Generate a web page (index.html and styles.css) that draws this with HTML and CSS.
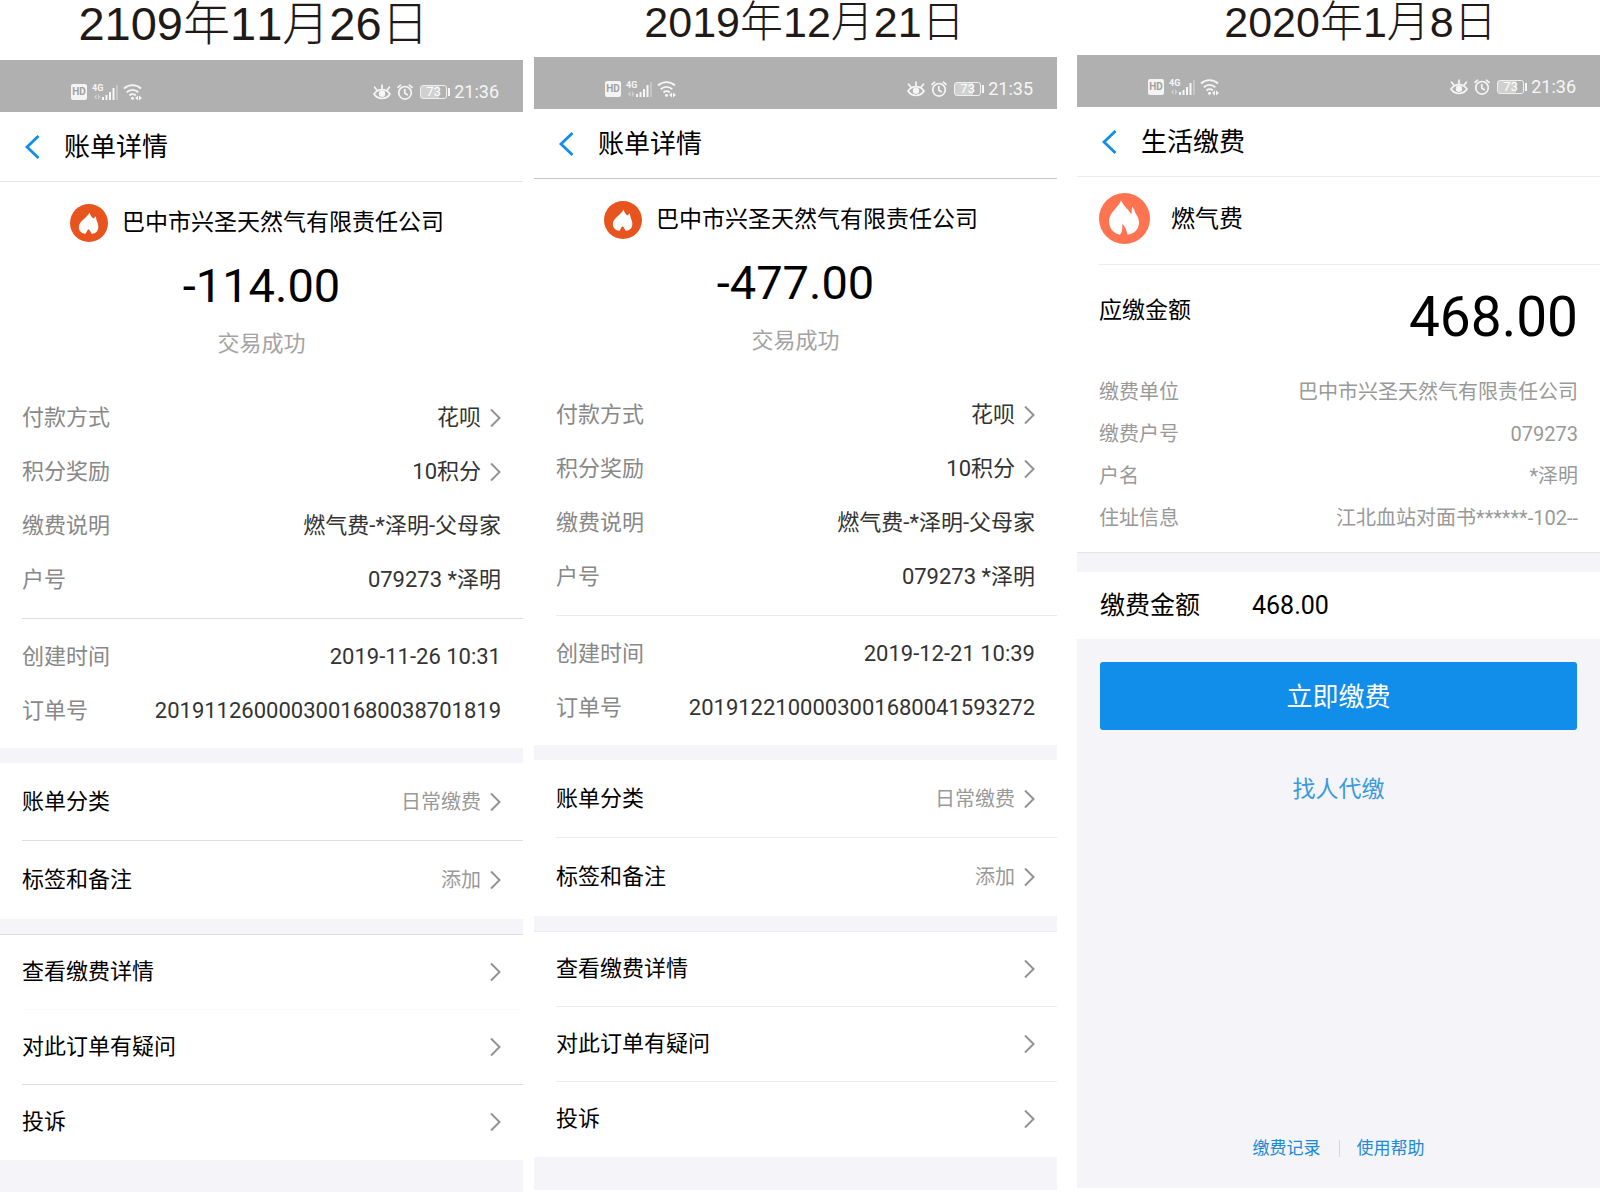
FILE: index.html
```html
<!DOCTYPE html>
<html lang="zh-CN">
<head>
<meta charset="utf-8">
<meta name="viewport" content="width=device-width, initial-scale=1">
<title>燃气费缴费记录</title>
<link rel="stylesheet" href="styles.css">
</head>
<body>
<svg class="sprite" aria-hidden="true">
  <symbol id="i-signal" viewBox="0 0 26 18">
    <path d="M1 14l2.500-3v6zM7.500 14L5 11v6z" fill="#cfcfcf"/>
    <path d="M9 14h2v3H9zM12.500 12h2v5h-2zM16 9h2v8h-2zM19.500 5h2v12h-2z" fill="#f6f6f6"/>
    <path d="M23 2h2v15h-2z" fill="#c6c6c6"/>
  </symbol>
  <symbol id="i-wifi" viewBox="0 0 20 18">
    <g fill="none" stroke="#f6f6f6" stroke-width="1.900">
      <path d="M1 5.500a12.500 12.500 0 0 1 17 0"/>
      <path d="M3.800 9.200a8.200 8.200 0 0 1 11.400 0"/>
      <path d="M6.500 12.500a4.600 4.600 0 0 1 6.200 0"/>
    </g>
    <circle cx="9.500" cy="15.300" r="1.500" fill="#f6f6f6"/>
    <path d="M12 15l3-2.500v5zM19 15l-3-2.500v5z" fill="#f6f6f6"/>
  </symbol>
  <symbol id="i-eye" viewBox="0 0 18 16">
    <g fill="none" stroke="#f6f6f6" stroke-width="1.700" stroke-linecap="round">
      <path d="M1 10c4-5.800 12-5.800 16 0-4 6-12 6-16 0z"/>
      <path d="M9 1.200v3M1.600 3.200l2.200 2.800M16.400 3.200l-2.200 2.800"/>
    </g>
    <circle cx="9" cy="9.800" r="3.200" fill="#f6f6f6"/>
  </symbol>
  <symbol id="i-alarm" viewBox="0 0 16 16">
    <g fill="none" stroke="#f6f6f6" stroke-width="1.700" stroke-linecap="round" stroke-linejoin="round">
      <circle cx="8" cy="8.800" r="6.300"/>
      <path d="M7.800 5.500v3.600l2.400 1.700M1 3.400l2.600-2.200M15 3.400l-2.600-2.200"/>
    </g>
  </symbol>
  <symbol id="i-back" viewBox="0 0 16 24">
    <path d="M14.500 1L3 12l11.500 11" fill="none" stroke="#118ee9" stroke-width="2.800"/>
  </symbol>
  <symbol id="i-next" viewBox="0 0 11 20">
    <path d="M1 1.500L9.500 10 1 18.500" fill="none" stroke="#939393" stroke-width="2"/>
  </symbol>
  <symbol id="i-flame" viewBox="0 0 38 38">
    <circle cx="19" cy="19" r="19" fill="#e8541e"/>
    <path d="M19.500 8.500C17.500 13.500 9 17 8.800 23c0 4 2.800 6.600 6.400 6.800 1.300-.2 1.300-3.400 3.300-4.600 2.200 1.200 2.300 4.400 3.800 4.600 4-.5 6.300-3.300 6-7.800-.2-3-1.700-4.500-2-7l-.6-2.800-2.200 2.300c-1.800-1.300-3.200-3.200-4-6z" fill="#fff"/>
  </symbol>
  <symbol id="i-flame-lg" viewBox="0 0 51 51">
    <circle cx="25.500" cy="25.500" r="25.500" fill="#ff7350"/>
    <path d="M22 7.500C19.500 14.500 10 19.500 10 28c0 7.500 4.500 12.300 10.800 13.800 2-1.500 3-6 2.400-10.800 3.500 2.800 4.500 7 5.300 10.800C35.500 40.800 40 36 40 29.500c0-6-4-8.500-4.600-12.500L33 13.500l-.5 8C29.500 16.500 25 13.500 22 7.500z" fill="#fff"/>
  </symbol>
</svg>

<main class="board">
  <section class="shot shot--first">
    <h2 class="caption">2109年11月26日</h2>
    <article class="phone">
      <div class="statusbar">
        <span class="hd">HD</span>
        <span class="net">4G</span>
        <svg class="ic-signal"><use href="#i-signal"/></svg>
        <svg class="ic-wifi"><use href="#i-wifi"/></svg>
        <svg class="ic-eye"><use href="#i-eye"/></svg>
        <svg class="ic-alarm"><use href="#i-alarm"/></svg>
        <span class="battery">73</span>
        <time>21:36</time>
      </div>
      <header class="navbar">
        <button class="back" type="button" aria-label="返回"><svg><use href="#i-back"/></svg></button>
        <h1>账单详情</h1>
      </header>
      <div class="summary">
        <div class="payee"><svg><use href="#i-flame"/></svg><span>巴中市兴圣天然气有限责任公司</span></div>
        <p class="amount">-114.00</p>
        <p class="state">交易成功</p>
      </div>
      <div class="details">
        <dl>
          <div class="item"><dt>付款方式</dt><dd>花呗<svg class="next"><use href="#i-next"/></svg></dd></div>
          <div class="item"><dt>积分奖励</dt><dd>10积分<svg class="next"><use href="#i-next"/></svg></dd></div>
          <div class="item"><dt>缴费说明</dt><dd>燃气费-*泽明-父母家</dd></div>
          <div class="item"><dt>户号</dt><dd>079273 *泽明</dd></div>
        </dl>
        <dl>
          <div class="item"><dt>创建时间</dt><dd>2019-11-26 10:31</dd></div>
          <div class="item"><dt>订单号</dt><dd>2019112600003001680038701819</dd></div>
        </dl>
      </div>
      <nav class="group group--tall">
        <a class="row" href="#category"><span>账单分类</span><em>日常缴费</em><svg class="next"><use href="#i-next"/></svg></a>
        <a class="row" href="#note"><span>标签和备注</span><em>添加</em><svg class="next"><use href="#i-next"/></svg></a>
      </nav>
      <nav class="group group--ruled">
        <a class="row row--faint" href="#detail"><span>查看缴费详情</span><svg class="next"><use href="#i-next"/></svg></a>
        <a class="row" href="#question"><span>对此订单有疑问</span><svg class="next"><use href="#i-next"/></svg></a>
        <a class="row" href="#complain"><span>投诉</span><svg class="next"><use href="#i-next"/></svg></a>
      </nav>
    </article>
  </section>

  <section class="shot shot--second">
    <h2 class="caption">2019年12月21日</h2>
    <article class="phone">
      <div class="statusbar">
        <span class="hd">HD</span>
        <span class="net">4G</span>
        <svg class="ic-signal"><use href="#i-signal"/></svg>
        <svg class="ic-wifi"><use href="#i-wifi"/></svg>
        <svg class="ic-eye"><use href="#i-eye"/></svg>
        <svg class="ic-alarm"><use href="#i-alarm"/></svg>
        <span class="battery">73</span>
        <time>21:35</time>
      </div>
      <header class="navbar">
        <button class="back" type="button" aria-label="返回"><svg><use href="#i-back"/></svg></button>
        <h1>账单详情</h1>
      </header>
      <div class="summary">
        <div class="payee"><svg><use href="#i-flame"/></svg><span>巴中市兴圣天然气有限责任公司</span></div>
        <p class="amount">-477.00</p>
        <p class="state">交易成功</p>
      </div>
      <div class="details">
        <dl>
          <div class="item"><dt>付款方式</dt><dd>花呗<svg class="next"><use href="#i-next"/></svg></dd></div>
          <div class="item"><dt>积分奖励</dt><dd>10积分<svg class="next"><use href="#i-next"/></svg></dd></div>
          <div class="item"><dt>缴费说明</dt><dd>燃气费-*泽明-父母家</dd></div>
          <div class="item"><dt>户号</dt><dd>079273 *泽明</dd></div>
        </dl>
        <dl>
          <div class="item"><dt>创建时间</dt><dd>2019-12-21 10:39</dd></div>
          <div class="item"><dt>订单号</dt><dd>2019122100003001680041593272</dd></div>
        </dl>
      </div>
      <nav class="group group--tall">
        <a class="row" href="#category"><span>账单分类</span><em>日常缴费</em><svg class="next"><use href="#i-next"/></svg></a>
        <a class="row" href="#note"><span>标签和备注</span><em>添加</em><svg class="next"><use href="#i-next"/></svg></a>
      </nav>
      <nav class="group group--ruled">
        <a class="row" href="#detail"><span>查看缴费详情</span><svg class="next"><use href="#i-next"/></svg></a>
        <a class="row" href="#question"><span>对此订单有疑问</span><svg class="next"><use href="#i-next"/></svg></a>
        <a class="row" href="#complain"><span>投诉</span><svg class="next"><use href="#i-next"/></svg></a>
      </nav>
    </article>
  </section>

  <section class="shot shot--third">
    <h2 class="caption">2020年1月8日</h2>
    <article class="phone">
      <div class="statusbar">
        <span class="hd">HD</span>
        <span class="net">4G</span>
        <svg class="ic-signal"><use href="#i-signal"/></svg>
        <svg class="ic-wifi"><use href="#i-wifi"/></svg>
        <svg class="ic-eye"><use href="#i-eye"/></svg>
        <svg class="ic-alarm"><use href="#i-alarm"/></svg>
        <span class="battery">73</span>
        <time>21:36</time>
      </div>
      <header class="navbar">
        <button class="back" type="button" aria-label="返回"><svg><use href="#i-back"/></svg></button>
        <h1>生活缴费</h1>
      </header>
      <div class="bill">
        <div class="biller"><svg><use href="#i-flame-lg"/></svg><h3>燃气费</h3></div>
        <div class="due"><span>应缴金额</span><strong>468.00</strong></div>
        <dl class="facts">
          <div class="fact"><dt>缴费单位</dt><dd>巴中市兴圣天然气有限责任公司</dd></div>
          <div class="fact"><dt>缴费户号</dt><dd>079273</dd></div>
          <div class="fact"><dt>户名</dt><dd>*泽明</dd></div>
          <div class="fact"><dt>住址信息</dt><dd>江北血站对面书******-102--</dd></div>
        </dl>
      </div>
      <form class="pay">
        <div class="field">
          <label for="pay-amount">缴费金额</label>
          <input id="pay-amount" type="text" inputmode="decimal" value="468.00">
        </div>
        <button class="submit" type="button">立即缴费</button>
        <a class="delegate" href="#delegate">找人代缴</a>
      </form>
      <footer class="links">
        <a href="#history">缴费记录</a>
        <a href="#help">使用帮助</a>
      </footer>
    </article>
  </section>
</main>
</body>
</html>
```

FILE: styles.css
```css
*, *::before, *::after { box-sizing: border-box; }

body {
  margin: 0;
  background: #fff;
  color: #000;
  font-family: Roboto, "Noto Sans CJK SC", sans-serif;
  font-size: 22px;
  line-height: 32px;
}

h1, h2, h3, p, dl, dd { margin: 0; font-weight: 400; }
a { color: inherit; text-decoration: none; }
svg { display: block; flex: none; }
.sprite { position: absolute; width: 0; height: 0; }

/* Three screens side by side */
.board { display: flex; min-height: 100vh; }
.shot { flex: 1 1 0; min-width: 0; display: flex; flex-direction: column; }
.shot--first { --rule: #dedede; --head-rule: #e6e6e6; --caption: 60px; }
.shot--second { --rule: #ebebeb; --head-rule: #c8c8c8; --caption: 57px; margin-left: 11px; padding-bottom: 2px; }
.shot--third { --rule: #ececec; --head-rule: #ececec; --caption: 55px; margin-left: 20px; padding-bottom: 4px; }

.caption {
  height: var(--caption);
  color: #1f1a17;
  font-family: "Liberation Sans", "Noto Sans CJK SC", sans-serif;
  font-weight: 300;
  font-size: 43px;
  font-kerning: none;
  line-height: 44px;
  text-align: center;
  white-space: nowrap;
}
.shot--first .caption { padding-right: 16px; font-size: 47px; line-height: 47px; }
.shot--second .caption { padding-left: 18px; }
.shot--third .caption { padding-left: 44px; }

.phone { flex: 1; display: flex; flex-direction: column; background: #f4f4f9; }

/* Status bar */
.statusbar {
  display: flex;
  align-items: center;
  height: 52px;
  padding: 12px 24px 0 71px;
  background: #b0b0b0;
  color: #f6f6f6;
  font-size: 18px;
}
.hd {
  width: 16px;
  height: 16px;
  border-radius: 2px;
  background: #f4f4f4;
  color: #a0a0a0;
  font-size: 10px;
  font-weight: 700;
  line-height: 16px;
  text-align: center;
}
.net {
  width: 12px;
  height: 18px;
  margin-left: 5px;
  font-size: 9px;
  font-weight: 700;
  line-height: 10px;
}
.ic-signal { width: 26px; height: 18px; margin-left: -11px; }
.ic-wifi { width: 20px; height: 18px; margin-left: 4px; }
.ic-eye { width: 18px; height: 16px; margin-left: auto; }
.ic-alarm { width: 16px; height: 16px; margin-left: 6px; }
.battery {
  display: flex;
  justify-content: center;
  position: relative;
  width: 27px;
  height: 14px;
  margin: 0 7px;
  border: 1px solid #f0f0f0;
  border-radius: 3px;
  background: linear-gradient(90deg, #d0d0d0 18px, transparent 18px);
  color: #fff;
  font-size: 13px;
  line-height: 12px;
}
.battery::after {
  content: "";
  position: absolute;
  top: 2px;
  right: -4px;
  width: 2px;
  height: 8px;
  background: #f6f6f6;
}

/* Title bar */
.navbar {
  display: flex;
  align-items: center;
  gap: 24px;
  height: 70px;
  padding-left: 24px;
  background: #fff;
  border-bottom: 1px solid var(--head-rule);
}
.navbar h1 { font-size: 26px; line-height: 36px; }
.back { padding: 0; border: 0; background: none; cursor: pointer; }
.back svg { width: 16px; height: 24px; }

/* Bill summary */
.summary { padding: 22px 0 20px; background: #fff; text-align: center; }
.payee {
  display: flex;
  align-items: center;
  gap: 14px;
  padding-left: 70px;
  font-size: 23px;
  line-height: 38px;
  white-space: nowrap;
}
.payee svg { width: 38px; height: 38px; }
.amount { margin-top: 16px; font-size: 47px; line-height: 56px; }
.state { margin-top: 14px; color: #a3a3a3; }

.details { padding-left: 22px; background: #fff; }
.details dl { padding: 11px 0; }
.details dl + dl { padding-bottom: 10px; border-top: 1px solid var(--rule); }
.item {
  display: flex;
  align-items: center;
  justify-content: space-between;
  height: 54px;
  padding-right: 22px;
  white-space: nowrap;
}
.item dt { color: #888; }
.item dd { display: flex; align-items: center; gap: 9px; color: #333; }
.next { width: 11px; height: 20px; }

/* Link groups */
.group { margin-top: 15px; padding-left: 22px; background: #fff; }
.group--ruled { border-top: 1px solid var(--rule); }
.row {
  display: flex;
  align-items: center;
  gap: 9px;
  height: 75px;
  padding-right: 22px;
  border-bottom: 1px solid var(--rule);
}
.group--tall .row { height: 78px; }
.row:last-child { border-bottom-color: transparent; }
.row--faint { border-bottom-color: #fbfbfb; }
.row span { flex: 1; }
.row em { color: #999; font-size: 20px; font-style: normal; }

/* Payment screen */
.bill { padding: 0 0 13px 22px; background: #fff; border-bottom: 1px solid #e4e4e8; }
.biller {
  display: flex;
  align-items: center;
  gap: 21px;
  padding: 16px 0 20px;
  border-bottom: 1px solid var(--rule);
}
.biller svg { width: 51px; height: 51px; }
.biller h3 { font-size: 24px; line-height: 36px; }
.due {
  display: flex;
  justify-content: space-between;
  padding: 20px 22px 22px 0;
  font-size: 23px;
  line-height: 52px;
}
.due strong { font-size: 55px; font-weight: 400; line-height: 64px; }
.fact {
  display: flex;
  justify-content: space-between;
  padding-right: 22px;
  color: #999;
  font-size: 20px;
  line-height: 42px;
  white-space: nowrap;
}

.pay { display: flex; flex-direction: column; margin-top: 19px; }
.field {
  display: flex;
  align-items: center;
  gap: 52px;
  height: 67px;
  padding: 0 23px;
  background: #fff;
  font-size: 25px;
}
.field input {
  flex: 1;
  min-width: 0;
  height: 32px;
  padding: 0;
  border: 0;
  outline: 0;
  background: none;
  color: #000;
  font: inherit;
}
.submit {
  height: 68px;
  margin: 23px 23px 0;
  padding: 2px 0 0;
  border: 0;
  border-radius: 3px;
  background: #118eea;
  color: #fff;
  font: 26px/36px Roboto, "Noto Sans CJK SC", sans-serif;
  cursor: pointer;
}
.delegate {
  align-self: center;
  margin-top: 40px;
  color: #3a9ade;
  font-size: 23px;
  line-height: 40px;
}

.links {
  display: flex;
  justify-content: center;
  margin-top: auto;
  padding-bottom: 28px;
  color: #1a8ad8;
  font-size: 17px;
  line-height: 24px;
}
.links a { padding: 0 18px; }
.links a + a {
  background: linear-gradient(#d8d8dc, #d8d8dc) left center / 1px 17px no-repeat;
}
```
